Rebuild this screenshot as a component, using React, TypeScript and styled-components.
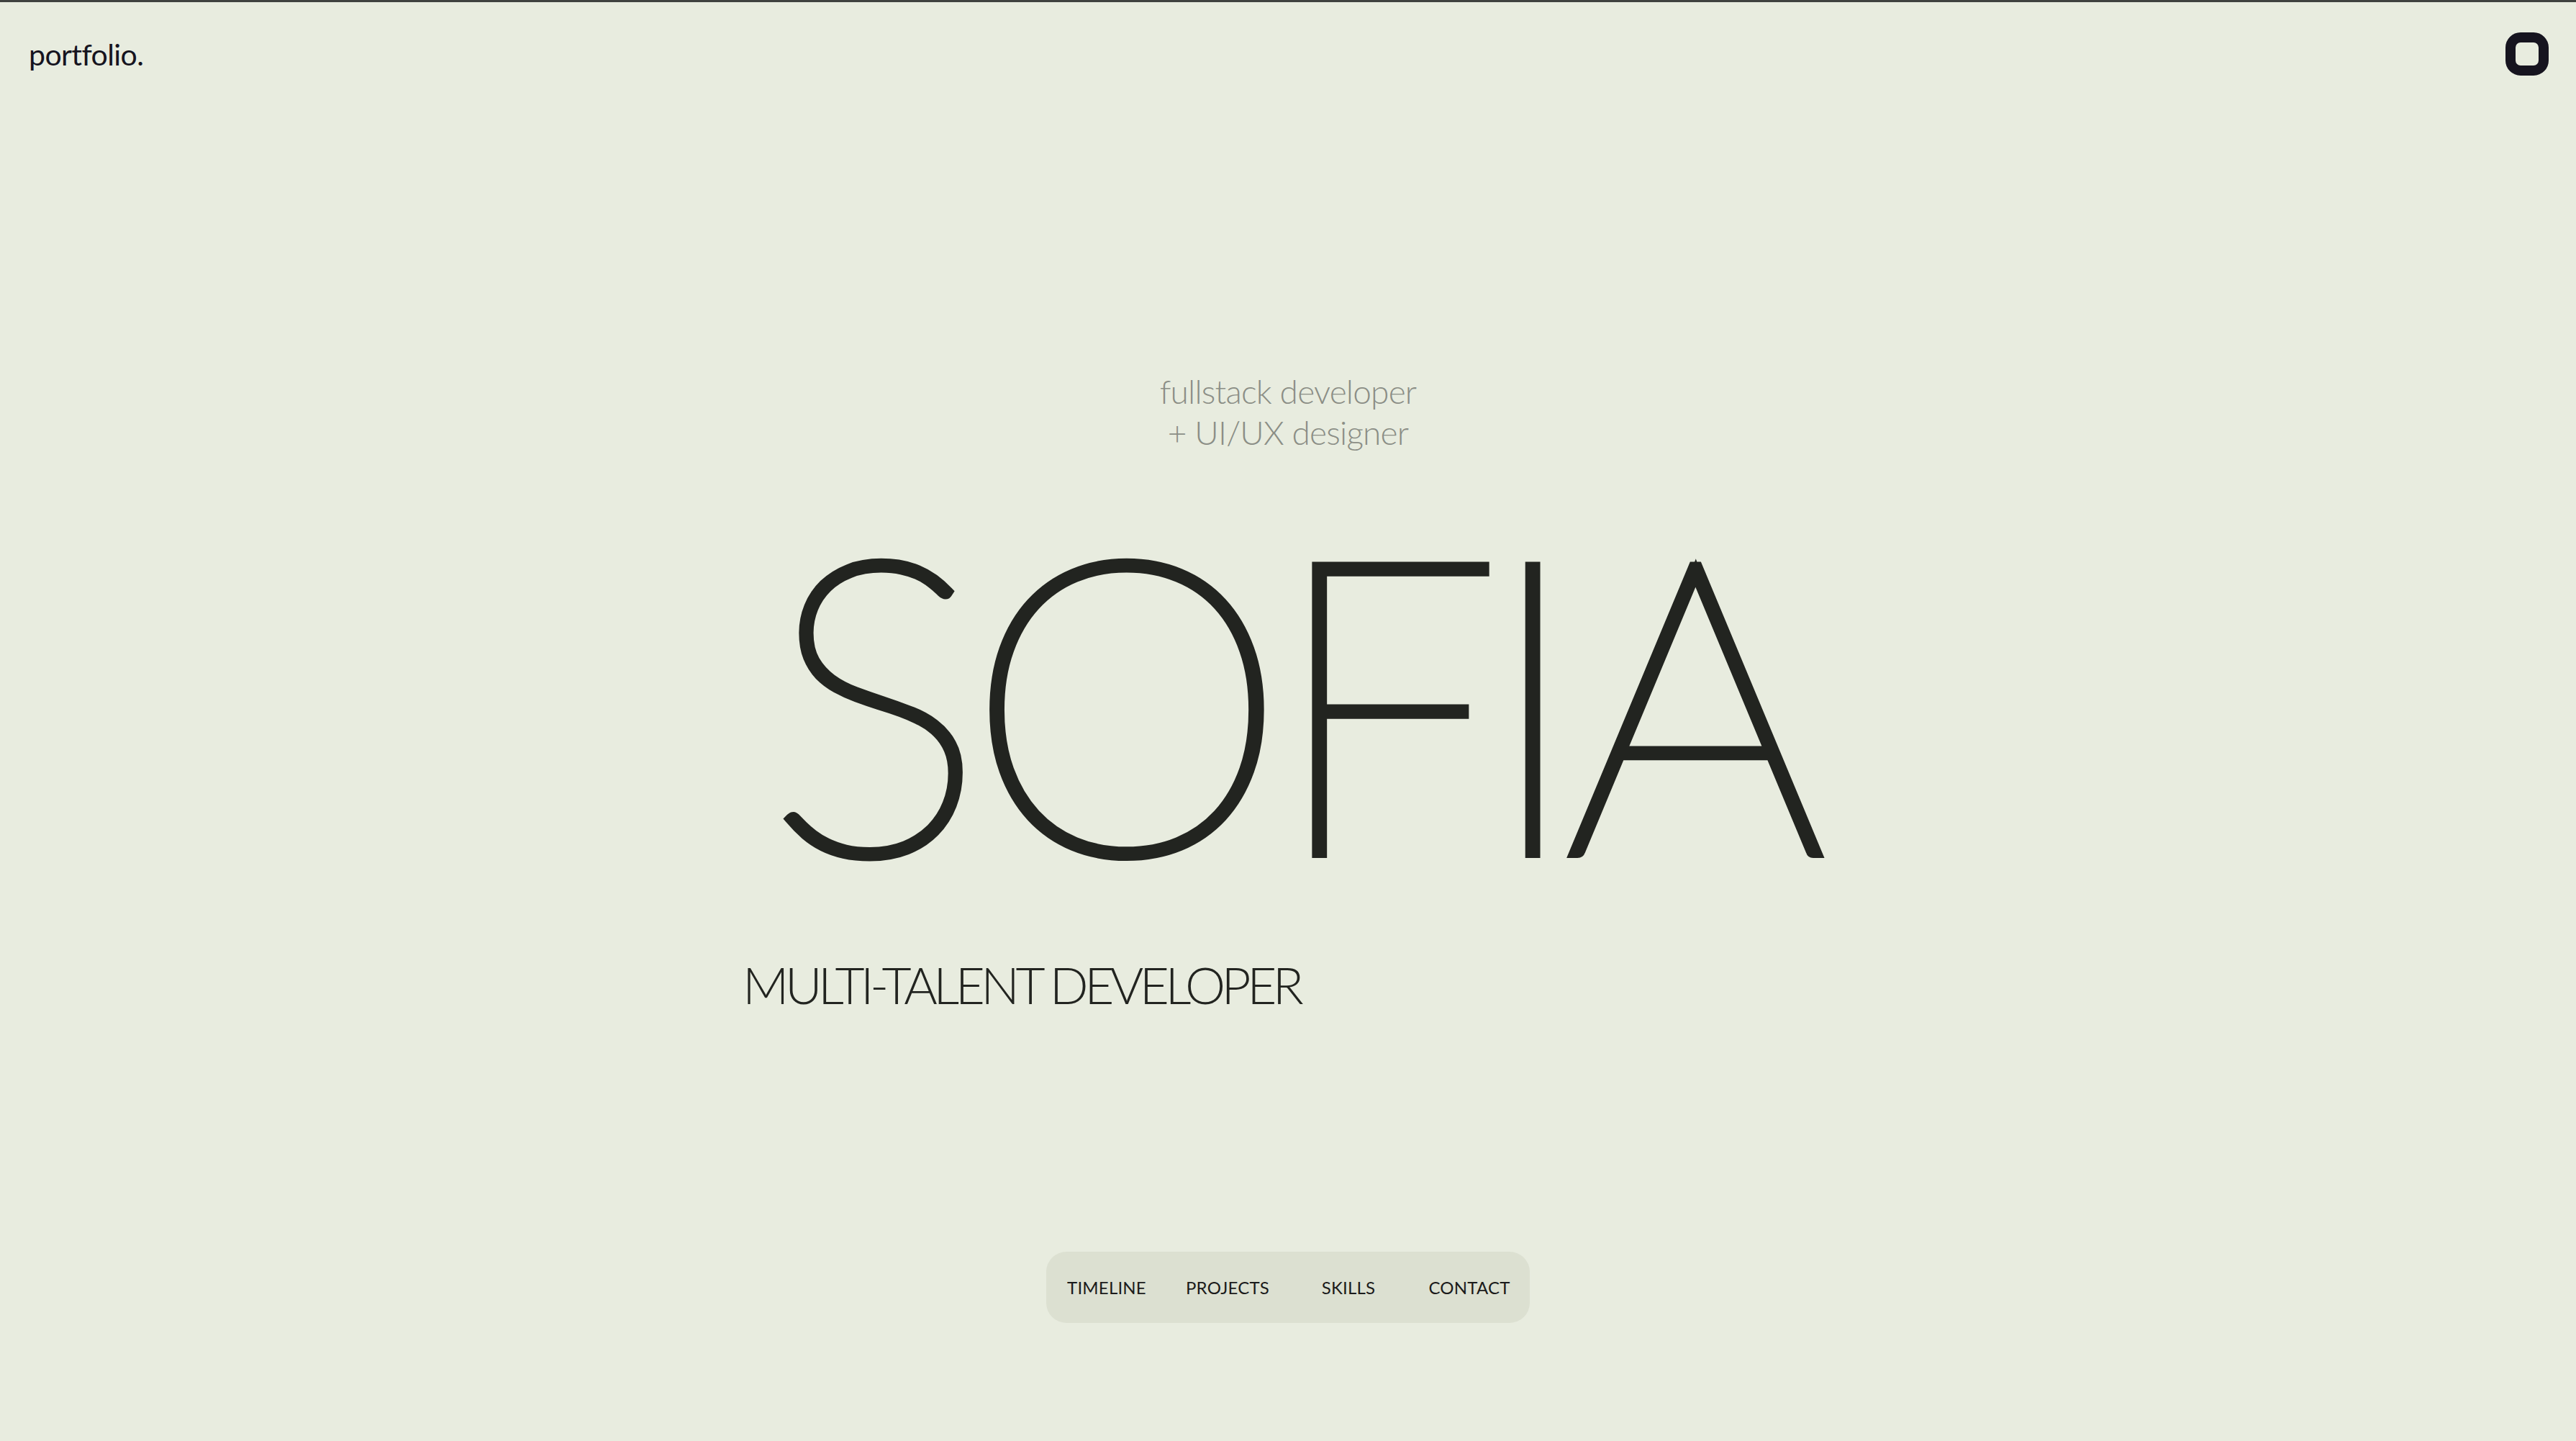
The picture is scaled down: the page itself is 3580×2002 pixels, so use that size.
import React from "react";
import styled, { createGlobalStyle } from "styled-components";

const Global = createGlobalStyle`
  html, body {
    margin: 0;
    padding: 0;
    background: #e8ecdf;
  }
  body {
    font-family: Lato, "Noto Sans", sans-serif;
    color: #16141f;
  }
  * { box-sizing: border-box; }
`;

const Page = styled.div`
  min-height: 100vh;
  border-top: 3px solid #3f423f;
  display: flex;
  flex-direction: column;
`;

const Header = styled.header`
  height: 144px;
  padding: 0 38px 0 40px;
  display: flex;
  align-items: center;
  justify-content: space-between;
`;

const Logo = styled.div`
  font-size: 41px;
  font-weight: 400;
  color: #16141f;
  letter-spacing: -0.6px;
`;

const IconButton = styled.button`
  width: 60px;
  height: 60px;
  padding: 0;
  border: none;
  background: transparent;
  display: flex;
  cursor: pointer;
`;

const Hero = styled.main`
  width: 1516px;
  margin: 368px auto 0;
  display: flex;
  flex-direction: column;
  align-items: center;
`;

const Subtitle = styled.p`
  margin: 0;
  font-size: 46px;
  line-height: 57px;
  font-weight: 300;
  color: #8b8e86;
  text-align: center;
  letter-spacing: -0.8px;
`;

const Name = styled.h1`
  margin: 106px 0 0;
  font-size: 568px;
  line-height: 460px;
  font-weight: 200;
  color: #222420;
  -webkit-text-stroke: 14px #222420;
  letter-spacing: -24px;
`;

const Tagline = styled.h2`
  align-self: flex-start;
  margin: 137px 0 0;
  font-size: 71px;
  line-height: 72px;
  font-weight: 300;
  color: #222420;
  letter-spacing: -5.5px;
`;

const Nav = styled.nav`
  margin: 335px auto 0;
  width: 672px;
  height: 99px;
  border-radius: 28px;
  background: #dce0d1;
  display: grid;
  grid-template-columns: repeat(4, 1fr);
  align-items: center;
`;

const NavLink = styled.a`
  text-align: center;
  font-size: 24px;
  font-weight: 400;
  letter-spacing: 0.2px;
  color: #1b1b1b;
  text-decoration: none;
`;

const navItems = ["TIMELINE", "PROJECTS", "SKILLS", "CONTACT"];

export default function App() {
  return (
    <>
      <Global />
      <Page>
        <Header>
          <Logo>portfolio.</Logo>
          <IconButton aria-label="menu">
            <svg width="60" height="60" viewBox="0 0 60 60">
              <rect x="7" y="7" width="46" height="46" rx="14" fill="none" stroke="#16141f" strokeWidth="14" />
            </svg>
          </IconButton>
        </Header>
        <Hero>
          <Subtitle>
            fullstack developer
            <br />+ UI/UX designer
          </Subtitle>
          <Name>SOFIA</Name>
          <Tagline>MULTI-TALENT DEVELOPER</Tagline>
        </Hero>
        <Nav>
          {navItems.map((n) => (
            <NavLink key={n} href="#">
              {n}
            </NavLink>
          ))}
        </Nav>
      </Page>
    </>
  );
}
